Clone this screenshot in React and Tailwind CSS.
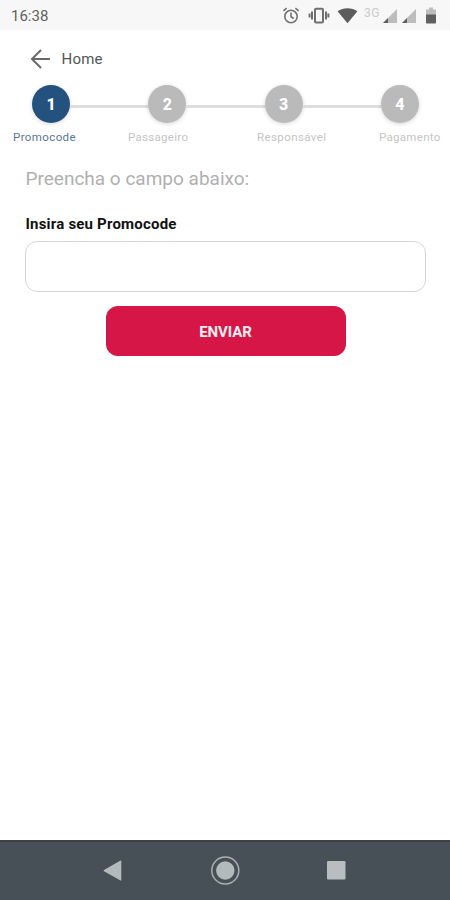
import { Fragment, useState } from 'react';

const steps = [
  { number: 1, label: 'Promocode', cell: 'w-[115px]', spacing: 'tracking-[0.4px]' },
  { number: 2, label: 'Passageiro', cell: 'w-[129px]', spacing: 'tracking-[0.3px]' },
  { number: 3, label: 'Responsável', cell: 'w-[122px]', spacing: 'tracking-[0.4px]' },
  { number: 4, label: 'Pagamento', cell: 'w-[70px]', spacing: 'tracking-[0.3px]' }
];

function SignalIcon() {
  return (
    <svg className="w-4 h-4" viewBox="0 0 16 16">
      <path d="M15 1v14H1z" fill="#bdbdbd" />
      <path d="M6 10v5H1z" fill="#606060" />
    </svg>
  );
}

function StatusBar() {
  return (
    <div className="flex h-[30px] shrink-0 items-center bg-[#f7f7f7] pl-[11px] pr-[13px] text-[#606060]">
      <span className="mt-[3px] text-[15px] leading-none">16:38</span>
      <div className="ml-auto flex items-center pt-[2px]">
        {/* Alarm */}
        <svg className="w-[18px] h-[18px]" viewBox="0 0 18 18" fill="none" stroke="#727272" strokeWidth="1.6">
          <circle cx="9" cy="9.5" r="6.2" />
          <path d="M9 5.5v4.3l2.8 1.7M1.4 3.8l3.2-2.7M16.6 3.8l-3.2-2.7" />
        </svg>
        {/* Vibrate */}
        <svg className="ml-2 w-[22px] h-[18px]" viewBox="0 0 22 18" fill="none" stroke="#707070" strokeWidth="2">
          <rect x="7" y="1.8" width="8" height="13.6" rx="1" />
          <path d="M4 4.6v8M18 4.6v8M1.6 6.6v4M20.4 6.6v4" />
        </svg>
        {/* Wifi */}
        <svg className="ml-[7px] w-[21px] h-[16px]" viewBox="0 0 21 16" fill="#5c5c5c">
          <path d="M.6 3.2C6-.7 15-.7 20.4 3.2L10.5 15.2z" />
        </svg>
        <span className="ml-[6px] -mt-[7px] w-[18px] text-[12px] leading-none tracking-[0.5px] text-[#cbcbcb]">3G</span>
        <SignalIcon />
        <span className="w-[3px]" />
        <SignalIcon />
        {/* Battery */}
        <svg className="ml-[8px] w-[12px] h-[18px]" viewBox="0 0 12 18">
          <path d="M1 2.5h3V.5h4v2h3V8H1z" fill="#bdbdbd" />
          <path d="M1 7.5h10v8.2q0 .8-.8.8H1.8q-.8 0-.8-.8z" fill="#606060" />
        </svg>
      </div>
    </div>
  );
}

function Stepper({ current }) {
  return (
    <div>
      <div className="flex items-center pl-8 pr-[31px]">
        {steps.map((step, index) => (
          <Fragment key={step.number}>
            {index > 0 && <div className="mt-[4px] h-[3px] flex-1 bg-[#dedede]" />}
            <div
              className={`flex h-[38px] w-[38px] shrink-0 items-center justify-center rounded-full pt-px text-[16px] font-extrabold text-white shadow-[0_1px_4px_rgba(0,0,0,0.16)] ${
                step.number === current ? 'bg-[#23527f]' : 'bg-[#bababa]'
              }`}
            >
              {step.number}
            </div>
          </Fragment>
        ))}
      </div>
      <div className="mt-[7px] flex pl-[13px] text-[11.5px] leading-[15px]">
        {steps.map((step) => (
          <span
            key={step.number}
            className={`${step.cell} ${step.spacing} shrink-0 ${step.number === current ? 'text-[#5b7598]' : 'text-[#c4c4c4]'}`}
          >
            {step.label}
          </span>
        ))}
      </div>
    </div>
  );
}

function NavigationBar() {
  return (
    <div className="flex h-[60px] shrink-0 items-center justify-center gap-[83px] border-t-2 border-[#3b4346] bg-[#465056]">
      <svg className="w-7 h-7" viewBox="0 0 28 28" fill="#b3babc">
        <path d="M5 12.9 21.500 3.500q.8-.4.8.5v19q0 .9-.8.5L5 14.300q-1-.7 0-1.400z" />
      </svg>
      <svg className="w-[30px] h-[30px]" viewBox="0 0 30 30">
        <circle cx="15.3" cy="14.5" r="13.5" fill="none" stroke="#a9b1b4" strokeWidth="1.5" />
        <circle cx="15.3" cy="14.5" r="9.2" fill="#b3babc" />
      </svg>
      <svg className="w-7 h-7" viewBox="0 0 28 28">
        <rect x="4" y="4" width="18.5" height="18.5" rx="1" fill="#b8bebf" />
      </svg>
    </div>
  );
}

function App() {
  const [promocode, setPromocode] = useState('');

  return (
    <div className="flex h-[900px] w-[450px] flex-col overflow-hidden bg-white font-['Roboto',sans-serif]">
      <StatusBar />

      {/* Header */}
      <header className="flex h-[55px] shrink-0 items-center pl-[30px] pt-[3px]">
        <button className="flex items-center" aria-label="Home">
          <svg className="w-[21px] h-[20px]" viewBox="0 0 21 20" fill="none" stroke="#686868" strokeWidth="2">
            <path d="M20 10H2M11 1 2 10l9 9" />
          </svg>
          <span className="ml-[10.5px] text-[15px] tracking-[0.2px] text-[#555]">Home</span>
        </button>
      </header>

      <Stepper current={1} />

      {/* Form */}
      <form className="flex flex-1 flex-col pl-[25px] pr-[24px] pt-[20px]" onSubmit={(e) => e.preventDefault()}>
        <p className="pl-[0.5px] text-[19px] leading-[28px] text-[#b0b0b0]">Preencha o campo abaixo:</p>
        <label htmlFor="promocode" className="mt-[21px] pl-[0.5px] text-[15px] font-bold leading-[20px] tracking-[0.2px] text-[#111]">
          Insira seu Promocode
        </label>
        <input
          id="promocode"
          value={promocode}
          onChange={(e) => setPromocode(e.target.value)}
          className="mt-[7px] h-[51px] w-full rounded-xl border-[1.5px] border-[#d6d6d6] px-4 outline-none"
        />
        <button className="mt-[14px] h-[50px] w-[240px] self-center rounded-xl bg-[#d51646] pt-[3px] text-[15px] font-bold tracking-[-0.1px] text-[#ffeef2]">
          ENVIAR
        </button>
      </form>

      <NavigationBar />
    </div>
  );
}

export default App;
